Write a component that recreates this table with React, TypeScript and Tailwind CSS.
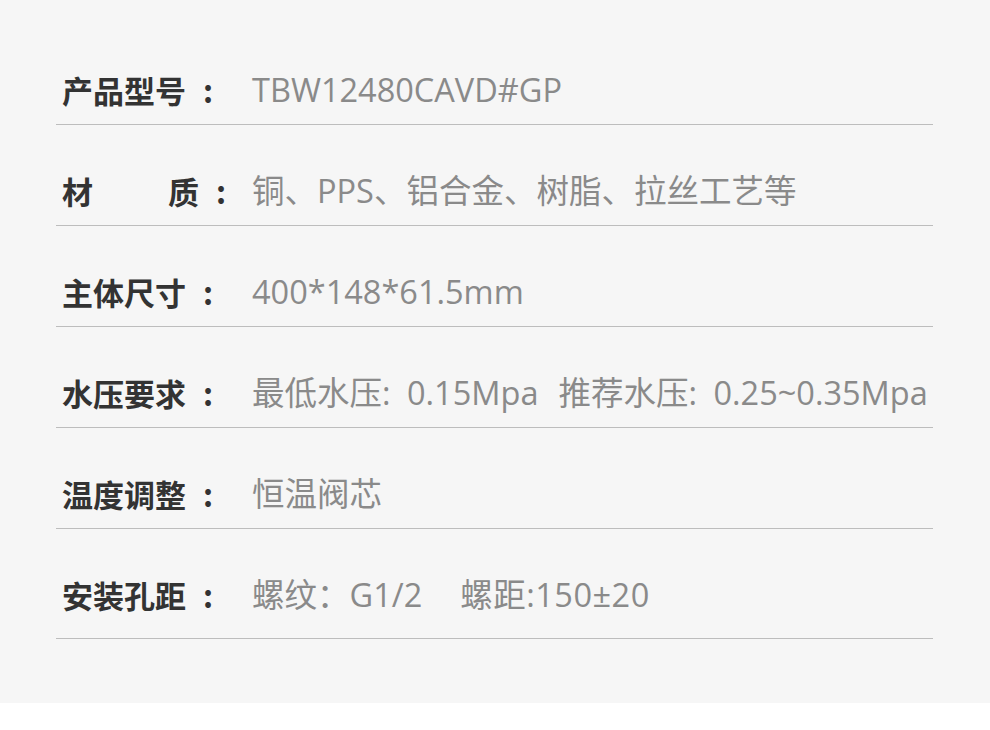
const ROWS: { label: string; value: React.ReactNode; spread?: boolean }[] = [
  { label: "产品型号", value: "TBW12480CAVD#GP" },
  { label: "材质", value: "铜、PPS、铝合金、树脂、拉丝工艺等", spread: true },
  { label: "主体尺寸", value: "400*148*61.5mm" },
  {
    label: "水压要求",
    value: (
      <span className="[word-spacing:8px]">
        最低水压: 0.15Mpa<span className="ml-[20px]">推荐水压: 0.25~0.35Mpa</span>
      </span>
    ),
  },
  { label: "温度调整", value: "恒温阀芯" },
  {
    label: "安装孔距",
    value: (
      <>
        螺纹：G1/2<span className="ml-[38px] tracking-[0.5px]">螺距:150±20</span>
      </>
    ),
  },
];

export default function App() {
  return (
    <div className="h-[730px] w-[990px] bg-white font-['Open_Sans','Noto_Sans_CJK_SC',sans-serif]">
      <div className="h-[703px] bg-[#f6f6f6] px-[56px] pt-[23px]">
        <div className="w-[877px]">
          {ROWS.map((row, i) => (
            <div
              key={row.label}
              className={
                "flex items-center border-b border-[#bdbdbd] pl-[6px] " +
                (i === 0 ? "pt-[47px] " : "pt-[46px] ") +
                (i === ROWS.length - 1 ? "pb-[23px]" : "pb-[14px]")
              }
            >
              <div className="flex w-[190px] shrink-0 font-['Noto_Sans_CJK_SC',sans-serif] text-[31px] font-bold leading-[40px] text-[#333]">
                {row.spread ? (
                  <>
                    <span className="w-[106px]">材</span>
                    <span>质</span>
                  </>
                ) : (
                  <span>{row.label}</span>
                )}
                <span className="ml-[17px]">:</span>
              </div>
              <div className="whitespace-nowrap text-[32.5px] leading-[40px] text-[#8a8a8a]">
                {row.value}
              </div>
            </div>
          ))}
        </div>
      </div>
    </div>
  );
}
